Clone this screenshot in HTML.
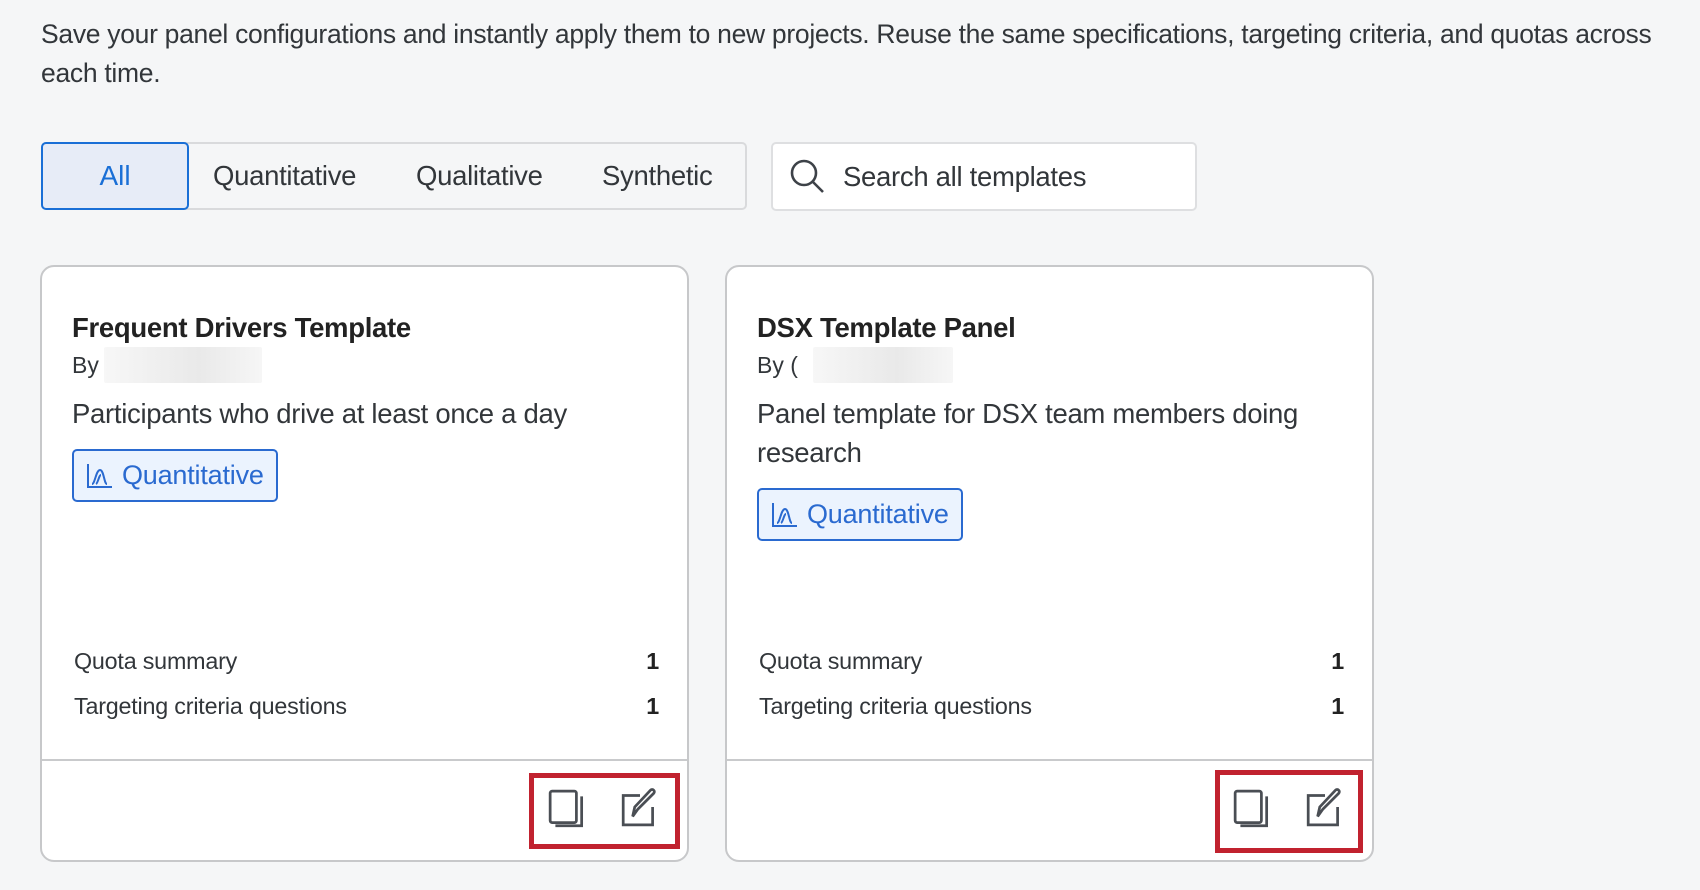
<!DOCTYPE html>
<html><head><meta charset="utf-8"><style>
*{box-sizing:border-box;margin:0;padding:0}
body{width:1700px;height:890px;overflow:hidden;background:#f5f6f7;font-family:"Liberation Sans",sans-serif;color:#32363a;position:relative}
.a{position:absolute;white-space:nowrap}
.intro{left:41px;font-size:26.5px;color:#32363a;letter-spacing:-0.3px}
.tabs{left:41px;top:142px;width:706px;height:68px;border:2px solid #d9dadc;border-radius:5px;background:#f5f6f7}
.tab{position:absolute;top:0;height:64px;line-height:64px;font-size:27.5px;color:#32363a;letter-spacing:-0.3px}
.all{left:-2px;top:-2px;width:148px;height:68px;border:2px solid #1a6fd6;border-radius:5px;background:#e7ecf7;color:#1a6fd6;text-align:center;line-height:64px;font-size:28px;position:absolute}
.search{left:771px;top:142px;width:426px;height:69px;border:2px solid #dedfe1;border-radius:5px;background:#fff}
.card{top:265px;width:649px;height:597px;background:#fff;border:2px solid #c7c8ca;border-radius:14px}
.card .t{left:30px;top:45px;font-size:27.5px;font-weight:bold;color:#222;letter-spacing:-0.3px}
.card .by{left:30px;top:85px;font-size:23px;color:#32363a}
.blur{position:absolute;top:80px;height:36px;width:158px;background:linear-gradient(90deg,#f7f7f7,#e9e9e9 60%,#f6f6f6);border-radius:2px}
.card .d{left:30px;font-size:27.5px;color:#32363a;letter-spacing:-0.3px;line-height:39px}
.badge{position:absolute;left:30px;width:206px;height:53px;border:2px solid #2a6ad0;border-radius:5px;background:#ebf3fe;color:#2a6ad0;font-size:27px;line-height:49px;padding-left:48px;letter-spacing:-0.2px}
.badge svg{position:absolute;left:12px;top:12px}
.row{left:32px;width:585px;font-size:23.3px;color:#32363a;letter-spacing:-0.2px}
.row b{position:absolute;right:0;color:#222}
.div{position:absolute;left:0;right:0;top:492px;border-top:2px solid #c9cacc}
.red{position:absolute;border:5px solid #c1222f}
</style></head><body>
<div class="a intro" style="top:19px">Save your panel configurations and instantly apply them to new projects. Reuse the same specifications, targeting criteria, and quotas across</div>
<div class="a intro" style="top:58px">each time.</div>

<div class="a tabs">
  <div class="all">All</div>
  <div class="tab" style="left:170px">Quantitative</div>
  <div class="tab" style="left:373px">Qualitative</div>
  <div class="tab" style="left:559px">Synthetic</div>
</div>
<div class="a search">
  <svg style="position:absolute;left:15px;top:13px" width="40" height="40" viewBox="0 0 40 40" fill="none" stroke="#3d4248" stroke-width="2.6"><circle cx="16" cy="16" r="12"/><path d="M25 25l10 10"/></svg>
  <div style="position:absolute;left:70px;top:0;line-height:65px;font-size:27.5px;color:#32363a;letter-spacing:-0.3px">Search all templates</div>
</div>

<div class="a card" style="left:40px">
  <div class="a t">Frequent Drivers Template</div>
  <div class="a by">By</div>
  <div class="blur" style="left:62px"></div>
  <div class="a d" style="top:127px">Participants who drive at least once a day</div>
  <div class="badge" style="top:182px"><svg width="28" height="26" viewBox="0 0 28 26" fill="none" stroke="#2a6ad0" stroke-width="2"><path d="M2 1v23h24"/><path d="M6 21c3 0 4-14 8-14s4 14 7 14"/><path d="M10 21c2-1 3-9 5-9"/></svg>Quantitative</div>
  <div class="a row" style="top:381px">Quota summary<b>1</b></div>
  <div class="a row" style="top:426px">Targeting criteria questions<b>1</b></div>
  <div class="div"></div>
  <div class="red" style="left:487px;top:506px;width:151px;height:76px"></div>
  <svg style="position:absolute;left:505px;top:521px" width="42" height="42" viewBox="0 0 40 40" fill="none" stroke="#4a4e54" stroke-width="2.6"><rect x="3" y="3" width="25" height="30" rx="2"/><path d="M33 8v28h-25"/></svg>
  <svg style="position:absolute;left:577px;top:519px" width="42" height="42" viewBox="0 0 40 40" fill="none" stroke="#4a4e54" stroke-width="2.6"><path d="M20 9H4v28h28V20"/><path d="M13 29l2-9L30 4c2-2 5 1 3 3L18 22z"/></svg>
</div>

<div class="a card" style="left:725px">
  <div class="a t">DSX Template Panel</div>
  <div class="a by">By (</div>
  <div class="blur" style="left:86px;width:140px"></div>
  <div class="a d" style="top:127px">Panel template for DSX team members doing<br>research</div>
  <div class="badge" style="top:221px"><svg width="28" height="26" viewBox="0 0 28 26" fill="none" stroke="#2a6ad0" stroke-width="2"><path d="M2 1v23h24"/><path d="M6 21c3 0 4-14 8-14s4 14 7 14"/><path d="M10 21c2-1 3-9 5-9"/></svg>Quantitative</div>
  <div class="a row" style="top:381px">Quota summary<b>1</b></div>
  <div class="a row" style="top:426px">Targeting criteria questions<b>1</b></div>
  <div class="div"></div>
  <div class="red" style="left:488px;top:503px;width:148px;height:83px"></div>
  <svg style="position:absolute;left:505px;top:521px" width="42" height="42" viewBox="0 0 40 40" fill="none" stroke="#4a4e54" stroke-width="2.6"><rect x="3" y="3" width="25" height="30" rx="2"/><path d="M33 8v28h-25"/></svg>
  <svg style="position:absolute;left:577px;top:519px" width="42" height="42" viewBox="0 0 40 40" fill="none" stroke="#4a4e54" stroke-width="2.6"><path d="M20 9H4v28h28V20"/><path d="M13 29l2-9L30 4c2-2 5 1 3 3L18 22z"/></svg>
</div>
</body></html>
